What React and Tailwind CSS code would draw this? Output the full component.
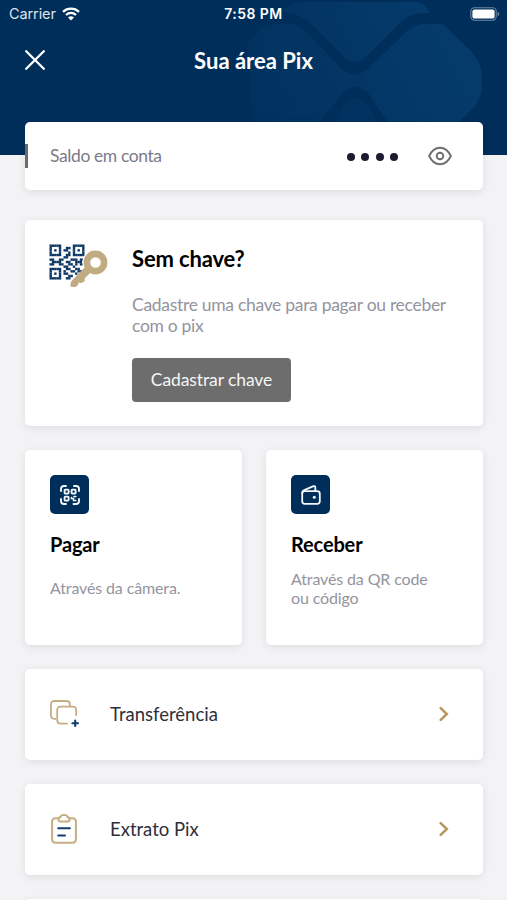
import React from "react";

const card = "rounded-[5px] bg-white shadow-[0_2px_8px_rgba(0,0,0,0.09)]";

// 15 x 15 module grid of the QR code
const QR_ROWS = [
  "111110000011111",
  "100010011010001",
  "101010110010101",
  "100010001010001",
  "111110011011111",
  "000000110000000",
  "110011000111011",
  "011110011001110",
  "110011001101011",
  "000000110010000",
  "111110011001100",
  "100010100110110",
  "101010110001000",
  "100010001100000",
  "111110011000000",
];

function PixWatermark() {
  return (
    <svg className="absolute inset-0 h-full w-full" viewBox="0 0 507 155" fill="none">
      <defs>
        <linearGradient id="wm" x1="245" y1="130" x2="440" y2="30" gradientUnits="userSpaceOnUse">
          <stop stopColor="#0a4a80" stopOpacity="0.08" />
          <stop offset="1" stopColor="#0a4a80" stopOpacity="0.46" />
        </linearGradient>
      </defs>
      <g fill="url(#wm)">
        <path d="M282 12Q290 2 301 2H416Q423 2 427 9L430 13H425Q409 13 401 22L366 57Q355 67 344 57L311 24Q299 12 282 12Z" />
        <path d="M247 44L260 29Q265 24 274 24H288Q298 24 305 31L339 66Q355 83 371 66L404 34Q413 24 423 24H443L471 51Q482 63 482 76V87Q482 98 472 109L457 124H389L368 93Q355 80 342 93L318 124H253Z" />
        <path d="M333 124L345 103Q355 94 366 103L378 124Z" opacity="0.6" />
      </g>
    </svg>
  );
}

function WifiIcon() {
  return (
    <svg className="h-[14px] w-[18px]" viewBox="0 0 18 14" fill="none" stroke="#fff" strokeWidth="2.3">
      <path d="M1 4.8C5.5 .6 12.5 .6 17 4.8" />
      <path d="M4 8C6.9 5.3 11.1 5.3 14 8" />
      <path d="M9 13.5L6 10.4Q9 8 12 10.4Z" fill="#fff" stroke="none" />
    </svg>
  );
}

function BatteryIcon() {
  return (
    <svg className="h-[14px] w-[30px]" viewBox="0 0 30 14" fill="none">
      <rect x=".8" y=".8" width="25.4" height="12.4" rx="3.6" stroke="#6d89a4" strokeWidth="1.1" />
      <rect x="2.4" y="2.4" width="22.2" height="9.2" rx="2.2" fill="#fff" />
      <path d="M27.6 5Q29.4 5.6 29.4 7T27.6 9.2Z" fill="#6d89a4" />
    </svg>
  );
}

function EyeIcon() {
  return (
    <svg className="h-[20px] w-[24px]" viewBox="0 0 24 20" fill="none" stroke="#6f6f6f" strokeWidth="1.9">
      <path d="M1.2 10C3.5 5 7.3 1.8 12 1.8S20.5 5 22.8 10C20.5 15 16.7 18.2 12 18.2S3.500 15 1.2 10Z" strokeLinejoin="round" />
      <circle cx="12" cy="10" r="3.3" />
    </svg>
  );
}

function QrKeyIcon() {
  return (
    <svg className="h-[45px] w-[60px]" viewBox="0 0 60 45" fill="none">
      <g fill="#0a3563">
        {QR_ROWS.flatMap((row, y) =>
          row.split("").map((cell, x) =>
            cell === "1" ? (
              <rect key={`${x}-${y}`} x={0.5 + x * 2.33} y={0.5 + y * 2.33} width="2.4" height="2.4" />
            ) : null
          )
        )}
      </g>
      <circle cx="46.500" cy="18.500" r="8.700" stroke="#fff" strokeWidth="9" />
      <path d="M40 26L24 41" stroke="#fff" strokeWidth="9" />
      <circle cx="46.500" cy="18.500" r="8.600" stroke="#c1ab82" strokeWidth="6.600" />
      <path d="M36.500 22.500L42 28L35.500 34.500Q36.500 37.500 34 38.300Q31.700 39.600 30.500 38.500L29.700 38.500Q29 43.200 24.500 43L21.500 42.800Q21 39 22.500 37Z" fill="#c1ab82" />
    </svg>
  );
}

function ScanIcon() {
  return (
    <svg className="h-[20px] w-[20px]" viewBox="0 0 20 20" fill="none" stroke="#f3f8fd" strokeWidth="1.9" strokeLinecap="round">
      <path d="M1 6V4Q1 1 4 1H6M14 1H16Q19 1 19 4V6M19 14V16Q19 19 16 19H13.5M6 19H4Q1 19 1 16V14" />
      <rect x="4.600" y="4.600" width="4" height="4" rx=".8" />
      <rect x="11.600" y="4.600" width="4" height="4" rx=".8" />
      <rect x="4.600" y="11.600" width="4" height="4" rx=".8" />
      <path d="M15.800 11.500H14M11.500 12.500V13.500H13.500V15.500H15.800" strokeWidth="1.600" />
    </svg>
  );
}

function WalletIcon() {
  return (
    <svg className="h-[20px] w-[20px]" viewBox="0 0 20 20" fill="none" stroke="#f3f8fd" strokeWidth="1.8" strokeLinejoin="round">
      <path d="M1.200 8.500Q1.200 6.200 3.500 6.200H16.200Q18.800 6.200 18.800 8.700V16.300Q18.800 18.800 16.300 18.800H3.700Q1.200 18.800 1.200 16.300Z" />
      <path d="M1.200 8.500Q1.200 6 3.800 4.900L12.500 1.200Q14.300 .6 14.300 2.500V6.200" />
      <circle cx="13.300" cy="12.300" r="1.500" fill="#f3f8fd" stroke="none" />
    </svg>
  );
}

function TransferIcon() {
  return (
    <svg className="h-[28px] w-[30px]" viewBox="0 0 30 28" fill="none" strokeWidth="1.800" strokeLinecap="round">
      <path d="M5.500 18.800H4.300Q1 18.800 1 15.500V4.300Q1 1 4.300 1H16.600Q19.900 1 19.900 4.300V6" stroke="#c5ad84" />
      <path d="M26.200 15V10Q26.200 6.700 22.900 6.700H10.500Q7.200 6.700 7.200 10V20.300Q7.200 23.600 10.500 23.600H17" stroke="#c5ad84" />
      <path d="M25.200 20.500V26M22.400 23.200H28" stroke="#123d70" strokeWidth="2.100" />
    </svg>
  );
}

function ClipboardIcon() {
  return (
    <svg className="ml-[1px] h-[30px] w-[26px]" viewBox="0 0 26 30" fill="none" strokeWidth="2" strokeLinecap="round">
      <path d="M7 4.200H4.700Q1.100 4.200 1.100 7.800V25.300Q1.100 28.700 4.700 28.700H21.300Q24.900 28.700 24.900 25.300V7.800Q24.900 4.200 21.300 4.200H19" stroke="#c5ad84" />
      <path d="M7.500 6Q7.100 3.700 9.500 3Q10.200 1 12 1H14Q15.800 1 16.500 3Q18.900 3.700 18.500 6Q18.300 7.500 16.500 7.500H9.500Q7.700 7.500 7.500 6Z" stroke="#c5ad84" />
      <path d="M7.200 14.200H18.900M7.200 21.400H14" stroke="#123d70" />
    </svg>
  );
}

function ActionCard({ icon, title, children }) {
  return (
    <div className={`${card} flex h-[195px] flex-1 flex-col px-[25px] pt-[25px]`}>
      <div className="flex h-[39px] w-[39px] items-center justify-center rounded-[5px] bg-[#002e5a]">{icon}</div>
      <h3 className="mt-[17px] text-[20px] leading-[26px] font-bold tracking-[-0.15px] text-black">{title}</h3>
      <div className="mt-[5px] flex h-[51px] items-center text-[16px] leading-[19px] tracking-[-0.13px] text-[#9494a0]">
        <p>{children}</p>
      </div>
    </div>
  );
}

function MenuRow({ icon, label }) {
  return (
    <div className={`${card} flex h-[91px] items-center pr-[34px] pb-[2px] pl-[25px]`}>
      <div className="flex w-[60px] shrink-0">{icon}</div>
      <span className="flex-1 text-[18.5px] leading-[24px] text-[#2f2f3c]">{label}</span>
      <svg className="h-[16px] w-[10px]" viewBox="0 0 10 16" fill="none" stroke="#b8975a" strokeWidth="2.5" strokeLinecap="round">
        <path d="M1.7 2.2L7.8 8L1.7 13.8" />
      </svg>
    </div>
  );
}

export default function App() {
  return (
    <div className="h-[900px] w-[507px] overflow-hidden bg-[#f3f3f5] font-[Lato,sans-serif]">
      <header className="relative h-[155px] bg-[#002e5a] text-white">
        <PixWatermark />
        <div className="relative grid h-[27px] grid-cols-3 items-center pr-[7px] pl-[9px] font-[Inter,sans-serif]">
          <div className="flex items-center gap-[6px] text-[14.5px] tracking-[-0.1px] text-[#dce4ec]">
            <span>Carrier</span>
            <WifiIcon />
          </div>
          <span className="pr-[2px] text-center text-[14px] font-semibold tracking-[0.45px]">7:58 PM</span>
          <div className="flex justify-end">
            <BatteryIcon />
          </div>
        </div>
        <div className="relative flex h-[66px] items-center px-[25px]">
          <svg className="h-[20px] w-[20px]" viewBox="0 0 20 20" stroke="#fff" strokeWidth="2.3" strokeLinecap="round">
            <path d="M1.2 1.2L18.8 18.8M18.8 1.2L1.2 18.8" />
          </svg>
          <h1 className="flex-1 pr-[20px] text-center text-[22px] font-bold">Sua área Pix</h1>
        </div>
      </header>

      <main className="relative -mt-[33px] flex flex-col gap-[24px] pr-[24px] pl-[25px]">
        <section className={`${card} mb-[6px] flex h-[68px] items-center pr-[31px]`}>
          <div className="h-[24px] w-[3px] bg-[#6b6b6b]" />
          <span className="ml-[22px] flex-1 text-[17.5px] tracking-[-0.4px] text-[#7b7b88]">Saldo em conta</span>
          <div className="mt-[2px] mr-[30px] flex gap-[6.5px]">
            <i className="h-[8px] w-[8px] rounded-full bg-[#1c1b30]" />
            <i className="h-[8px] w-[8px] rounded-full bg-[#1c1b30]" />
            <i className="h-[8px] w-[8px] rounded-full bg-[#1c1b30]" />
            <i className="h-[8px] w-[8px] rounded-full bg-[#1c1b30]" />
          </div>
          <EyeIcon />
        </section>

        <section className={`${card} flex h-[206px] pt-[24px] pl-[24px]`}>
          <div className="w-[83px] shrink-0">
            <QrKeyIcon />
          </div>
          <div>
            <h2 className="text-[22px] leading-[30px] font-bold tracking-[-0.15px] text-black">Sem chave?</h2>
            <p className="mt-[20px] w-[325px] text-[17.5px] leading-[21px] tracking-[-0.3px] text-[#9494a0]">
              Cadastre uma chave para pagar ou receber com o pix
            </p>
            <button className="mt-[22px] h-[44px] w-[159px] rounded-[4px] bg-[#6d6d6d] text-[17.5px] tracking-[-0.1px] text-[#f5f5f5]">
              Cadastrar chave
            </button>
          </div>
        </section>

        <section className="flex gap-[24px]">
          <ActionCard icon={<ScanIcon />} title="Pagar">
            Através da câmera.
          </ActionCard>
          <ActionCard icon={<WalletIcon />} title="Receber">
            Através da QR code
            <br />
            ou código
          </ActionCard>
        </section>

        <MenuRow icon={<TransferIcon />} label="Transferência" />
        <MenuRow icon={<ClipboardIcon />} label="Extrato Pix" />
        <div className={`${card} h-[91px]`} />
      </main>
    </div>
  );
}
